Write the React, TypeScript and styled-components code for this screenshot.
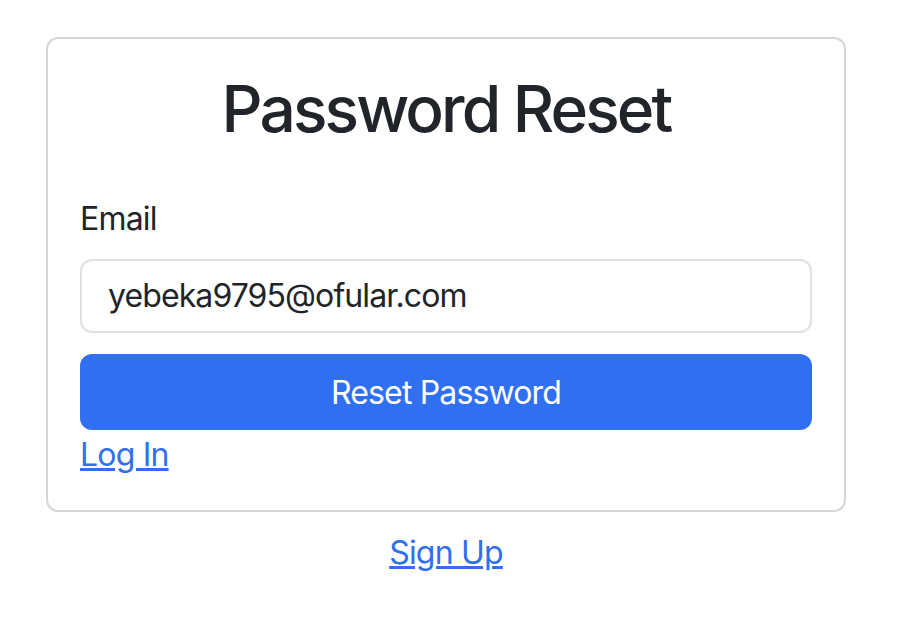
import styled, { createGlobalStyle } from "styled-components";

const GlobalStyle = createGlobalStyle`
  body {
    margin: 0;
    background: #ffffff;
    font-family: Inter, "Liberation Sans", sans-serif;
    color: #212529;
  }
`;

const Page = styled.div`
  width: 800px;
  margin-left: 46px;
  padding-top: 37px;
`;

const Card = styled.div`
  border: 2px solid #d6d6d6;
  border-radius: 12px;
  padding: 32px 32px 31px;
  display: flex;
  flex-direction: column;
`;

const Title = styled.h2`
  margin: 0 0 47px;
  font-size: 64px;
  font-weight: 500;
  line-height: 1.2;
  letter-spacing: -2.85px;
  text-align: center;
`;

const Label = styled.label`
  font-size: 32px;
  line-height: 48px;
  letter-spacing: -0.8px;
  margin-bottom: 16px;
`;

const Input = styled.input`
  box-sizing: border-box;
  height: 74px;
  width: 100%;
  border: 2px solid #dee2e6;
  border-radius: 12px;
  padding: 0 26px;
  font-family: inherit;
  font-size: 32px;
  letter-spacing: -0.9px;
  color: #212529;
  outline: none;
`;

const Button = styled.button`
  margin-top: 21px;
  height: 76px;
  width: 100%;
  border: none;
  border-radius: 12px;
  background: #316ff1;
  color: #ffffff;
  font-family: inherit;
  font-size: 32px;
  letter-spacing: -0.85px;
  padding-top: 2px;
`;

const LinkRow = styled.div<{ $center?: boolean }>`
  font-size: 32px;
  line-height: 48px;
  letter-spacing: -0.8px;
  text-align: ${(p) => (p.$center ? "center" : "left")};
  margin-top: ${(p) => (p.$center ? "17px" : "1px")};
`;

const Link = styled.a`
  color: #316ff1;
  text-decoration: underline;
`;

export default function App() {
  return (
    <Page>
      <GlobalStyle />
      <Card>
        <Title>Password Reset</Title>
        <Label htmlFor="email">Email</Label>
        <Input id="email" type="email" defaultValue="yebeka9795@ofular.com" />
        <Button>Reset Password</Button>
        <LinkRow>
          <Link href="#">Log In</Link>
        </LinkRow>
      </Card>
      <LinkRow $center>
        <Link href="#">Sign Up</Link>
      </LinkRow>
    </Page>
  );
}
